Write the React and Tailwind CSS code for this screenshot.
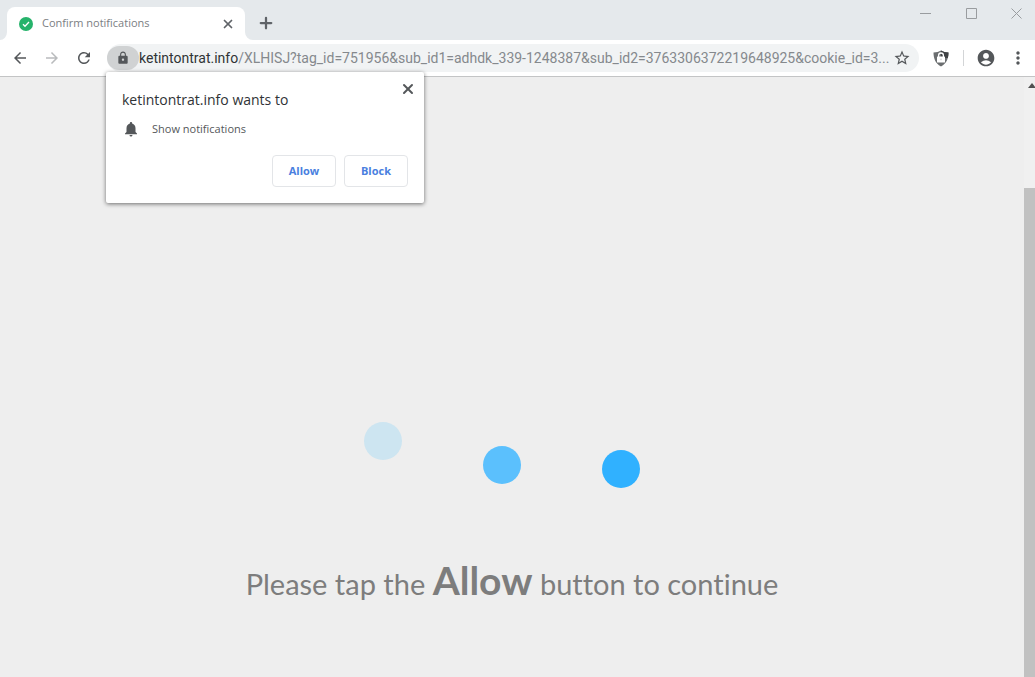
import { useState } from "react";
import { MdArrowBack, MdArrowForward, MdRefresh, MdLock, MdStarBorder, MdAccountCircle, MdMoreVert, MdNotifications } from "react-icons/md";
import { X, Plus } from "lucide-react";

const HOST = "ketintontrat.info";
const PATH = "/XLHISJ?tag_id=751956&sub_id1=adhdk_339-1248387&sub_id2=3763306372219648925&cookie_id=3...";

const dots = [
  { id: 1, className: "bg-[#cde5f1]" },
  { id: 2, className: "bg-[#5bc0fd] mt-6" },
  { id: 3, className: "bg-[#30b1ff] mt-7" },
];

function TabStrip() {
  return (
    <header className="flex h-10 items-start justify-between bg-[#e5e9ec] pl-[7px]">
      <div className="flex h-full items-end">
        <div className="relative flex h-[33px] w-[238px] items-center rounded-t-lg bg-white pr-2.5 pl-3">
          <svg viewBox="0 0 14 14" className="h-3.5 w-3.5 shrink-0">
            <circle cx="7" cy="7" r="7" fill="#26b36b" />
            <path d="M4 7.2l2 2 4-4.2" fill="none" stroke="#fff" strokeWidth="1.3" />
          </svg>
          <span className="ml-[9px] flex-1 text-[11px] text-[#7b7e82]">Confirm notifications</span>
          <button aria-label="Close tab" className="text-[#5f6368]">
            <X size={14} strokeWidth={3} />
          </button>
          <svg viewBox="0 0 8 8" className="absolute bottom-0 left-full h-2 w-2">
            <path d="M0 0v8h8a8 8 0 0 1-8-8z" fill="#fff" />
          </svg>
          <svg viewBox="0 0 7 8" className="absolute right-full bottom-0 h-2 w-[7px]">
            <path d="M7 0v8H0a7 8 0 0 0 7-8z" fill="#fff" />
          </svg>
        </div>
        <button aria-label="New tab" className="mb-2 ml-3 text-[#5f6368]">
          <Plus size={18} strokeWidth={3} />
        </button>
      </div>

      <div className="flex h-[26px] items-center text-[#999c9f]">
        <button aria-label="Minimize" className="flex w-[45px] justify-center">
          <svg viewBox="0 0 11 11" className="h-[11px] w-[11px]" fill="none" stroke="currentColor">
            <path d="M0 5.5h11" />
          </svg>
        </button>
        <button aria-label="Maximize" className="flex w-[46px] justify-center">
          <svg viewBox="0 0 11 11" className="h-[11px] w-[11px]" fill="none" stroke="currentColor">
            <path d="M.5 .5h10v10h-10z" />
          </svg>
        </button>
        <button aria-label="Close window" className="flex w-[41px] justify-center pl-1">
          <svg viewBox="0 0 11 11" className="h-[11px] w-[11px]" fill="none" stroke="currentColor">
            <path d="M.5 .5l10 10M10.5 .5l-10 10" />
          </svg>
        </button>
      </div>
    </header>
  );
}

function ShieldIcon() {
  return (
    <svg viewBox="0 0 16 17" className="h-[17px] w-4">
      <path d="M8 .5c2 1.3 4.500 1.800 7.500 1.900 0 5.600-1.700 10.800-7.500 14.100C2.200 13.200 .5 8 .5 2.400 3.500 2.300 6 1.800 8 .5z" fill="#6b6e70" />
      <path d="M8 .5c2 1.300 4.500 1.800 7.500 1.900 0 2-.2 3.800-.7 5.600H8z" fill="#3f4244" />
      <path d="M5.600 7V5.400a2.400 2.400 0 0 1 4.800 0V7" fill="none" stroke="#fff" strokeWidth="1.300" />
      <rect x="4" y="6.600" width="8" height="5.900" rx=".5" fill="#fff" />
      <path d="M8 8.600v1.600" stroke="#bbb" />
    </svg>
  );
}

function Toolbar() {
  const [path, setPath] = useState(PATH);

  return (
    <nav className="flex h-[37px] items-center border-b border-[#c3c4c5] bg-white pr-[7px] pl-[11px] text-[#54575a]">
      <div className="flex shrink-0 items-center gap-3.5">
        <button aria-label="Back">
          <MdArrowBack size={18} />
        </button>
        <button aria-label="Forward" className="text-[#b9bbbd]">
          <MdArrowForward size={18} />
        </button>
        <button aria-label="Reload">
          <MdRefresh size={18} />
        </button>
      </div>

      <div className="ml-3.5 flex h-7 min-w-0 flex-1 items-center rounded-full bg-[#f1f3f4] pr-2 font-['Roboto',sans-serif] text-sm">
        <button aria-label="Site information" className="flex h-6 w-8 shrink-0 items-center justify-center rounded-full bg-[#d0d2d3]">
          <MdLock size={14} />
        </button>
        <label htmlFor="address" className="text-[#303336]">
          {HOST}
        </label>
        <input
          id="address"
          type="text"
          value={path}
          onChange={(e) => setPath(e.target.value)}
          className="min-w-0 flex-1 bg-transparent text-[#85898d] outline-none"
        />
        <button aria-label="Bookmark this page" className="shrink-0">
          <MdStarBorder size={18} />
        </button>
      </div>

      <div className="flex shrink-0 items-center pl-3.5">
        <button aria-label="Ad blocker">
          <ShieldIcon />
        </button>
        <span className="mr-3 ml-3.5 h-4 w-px bg-[#d3d5d7]" />
        <button aria-label="Profile">
          <MdAccountCircle size={20} />
        </button>
        <button aria-label="Menu" className="ml-3">
          <MdMoreVert size={20} />
        </button>
      </div>
    </nav>
  );
}

function PermissionPopup({ onClose }) {
  return (
    <div
      role="dialog"
      aria-label="Notification permission"
      className="absolute top-[72px] left-[106px] w-[318px] rounded-xs bg-white p-4 shadow-[0_1px_4px_rgba(0,0,0,0.55)]"
    >
      <button aria-label="Close" onClick={onClose} className="absolute top-[9px] right-2 text-[#54575a]">
        <X size={16} strokeWidth={3} />
      </button>
      <h2 className="mt-0.5 text-sm text-[#303336]">{HOST} wants to</h2>
      <div className="mt-2.5 flex items-center gap-3 text-[11px] text-[#54575a]">
        <MdNotifications size={18} />
        <span>Show notifications</span>
      </div>
      <div className="mt-[17px] flex justify-end gap-2 text-[11px] font-bold text-[#4a7fe0]">
        <button onClick={onClose} className="h-8 w-16 rounded border border-[#e3e5e8]">
          Allow
        </button>
        <button onClick={onClose} className="h-8 w-16 rounded border border-[#e3e5e8]">
          Block
        </button>
      </div>
    </div>
  );
}

export default function App() {
  const [showPopup, setShowPopup] = useState(true);

  return (
    <div className="relative flex min-h-screen flex-col bg-[#eeeeee] font-['Open_Sans',sans-serif]">
      <TabStrip />
      <Toolbar />

      <div className="flex flex-1">
        <main className="flex-1 pt-[345px]">
          <div className="flex items-start justify-center gap-[81px] pr-5">
            {dots.map((dot) => (
              <span key={dot.id} className={`h-[38px] w-[38px] rounded-full ${dot.className}`} />
            ))}
          </div>
          <p className="mt-[62px] text-center font-['Lato',sans-serif] text-[29px] leading-[60px] whitespace-nowrap text-[#7d7d7d] [font-variant-ligatures:none]">
            Please tap the <strong className="text-[39px]">Allow</strong> button to continue
          </p>
        </main>

        <div className="flex w-[11px] flex-col items-end overflow-hidden bg-[#f0f0f0]">
          <svg viewBox="0 0 7 5" className="mt-1.5 h-[5px] w-[7px]">
            <path d="M0 5l4-5 4 5z" fill="#505050" />
          </svg>
          <div className="mt-[100px] w-full flex-1 bg-[#c1c1c1]" />
        </div>
      </div>

      {showPopup && <PermissionPopup onClose={() => setShowPopup(false)} />}
    </div>
  );
}
